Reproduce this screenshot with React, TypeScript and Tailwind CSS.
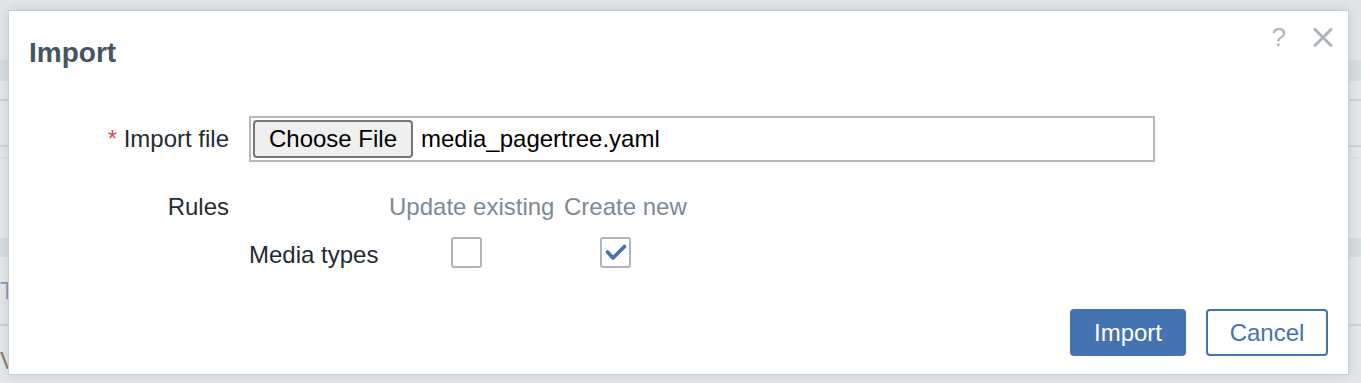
const font = "'Liberation Sans', Arial, sans-serif";

function Checkbox({ checked }: { checked: boolean }) {
  return (
    <span className="flex h-[31px] w-[31px] items-center justify-center rounded-[3px] border-2 border-[#adb6bc] bg-white">
      {checked && (
        <svg width="27" height="27" viewBox="0 0 27 27">
          <path
            d="M5.5 13 L11 19 L22.5 7.5"
            fill="none"
            stroke="#4572b0"
            strokeWidth="3.6"
            strokeLinecap="round"
            strokeLinejoin="round"
          />
        </svg>
      )}
    </span>
  );
}

export default function App() {
  return (
    <div
      className="relative h-[383px] w-[1361px] overflow-hidden bg-[#e3e7ea]"
      style={{ fontFamily: font }}
    >
      {/* page behind the overlay */}
      <div className="flex flex-col">
        <div className="h-[60px] bg-[#e1e5e8]" />
        <div className="h-[21px] bg-[#d7dcdf]" />
        <div className="h-[20px] border-b-2 border-[#cdd3d7] bg-[#e3e7ea]" />
        <div className="h-[46px] border-b-2 border-[#cdd3d7] bg-[#e3e7ea]" />
        <div className="h-[11px] border-b border-[#d9dee1] bg-[#e3e7ea]" />
        <div className="h-[80px] bg-[#e3e7ea]" />
        <div className="h-[19px] bg-[#d7dcdf]" />
        <div className="flex h-[69px] items-center border-b-2 border-[#cdd3d7] bg-[#e3e7ea]">
          <span className="text-[24px] leading-none text-[#7d9cc6]">T</span>
        </div>
        <div className="flex h-[53px] items-end bg-[#e3e7ea]">
          <span className="mb-[6px] text-[24px] leading-none text-[#8a7a6c]">V</span>
        </div>
      </div>

      {/* modal dialog */}
      <div className="absolute left-[8px] top-[10px] flex h-[365px] w-[1341px] flex-col border border-[#c9d0d4] bg-white shadow-[0_0_10px_rgba(0,0,0,0.12)]">
        {/* header */}
        <div className="flex items-start justify-between pt-[17px] pl-[20px] pr-[15px]">
          <h2 className="mt-[11px] text-[28px] font-bold leading-[28px] text-[#455463]">
            Import
          </h2>
          <div className="flex items-start gap-[27px]">
            <span className="-mt-[4px] text-[26px] leading-[26px] text-[#aeb7bd]">?</span>
            <svg width="20" height="19" viewBox="0 0 20 19">
              <path
                d="M2 1.5 L18 17.5 M18 1.5 L2 17.5"
                stroke="#aab4ba"
                strokeWidth="3"
                strokeLinecap="round"
              />
            </svg>
          </div>
        </div>

        {/* form */}
        <div className="mt-[49px] flex flex-col gap-[33px] text-[24px] leading-[24px] text-[#1f2c33]">
          <div className="flex items-center gap-[20px]">
            <label className="w-[220px] text-right">
              <span className="text-[#d64e4e]">*</span> Import file
            </label>
            <div className="flex h-[46px] w-[906px] items-center gap-[8px] border-2 border-[#b1bac0] p-[2px]">
              <button className="h-[38px] w-[160px] rounded-[4px] border-2 border-[#767676] bg-[#efefef] text-[24px] leading-[24px] text-black">
                Choose File
              </button>
              <span className="text-black">media_pagertree.yaml</span>
            </div>
          </div>

          <div className="flex items-start gap-[20px]">
            <label className="w-[220px] text-right">Rules</label>
            <div className="flex flex-col gap-[18px]">
              <div className="flex gap-[10px] whitespace-nowrap text-[#7b8b96]">
                <span className="w-[130px] shrink-0" />
                <span className="w-[165px] shrink-0">Update existing</span>
                <span>Create new</span>
              </div>
              <div className="flex items-center gap-[10px]">
                <span className="mt-[4px] w-[130px] shrink-0 whitespace-nowrap">Media types</span>
                <span className="flex w-[165px] shrink-0 pl-[62px]">
                  <Checkbox checked={false} />
                </span>
                <span className="flex pl-[36px]">
                  <Checkbox checked={true} />
                </span>
              </div>
            </div>
          </div>
        </div>

        {/* footer */}
        <div className="mt-auto flex justify-end gap-[20px] pb-[18px] pr-[20px]">
          <button className="h-[47px] w-[116px] rounded-[4px] border-2 border-[#4572b0] bg-[#4572b0] text-[24px] leading-[24px] text-white">
            Import
          </button>
          <button className="h-[47px] w-[122px] rounded-[4px] border-2 border-[#4572b0] bg-white text-[24px] leading-[24px] text-[#4572b0]">
            Cancel
          </button>
        </div>
      </div>
    </div>
  );
}
